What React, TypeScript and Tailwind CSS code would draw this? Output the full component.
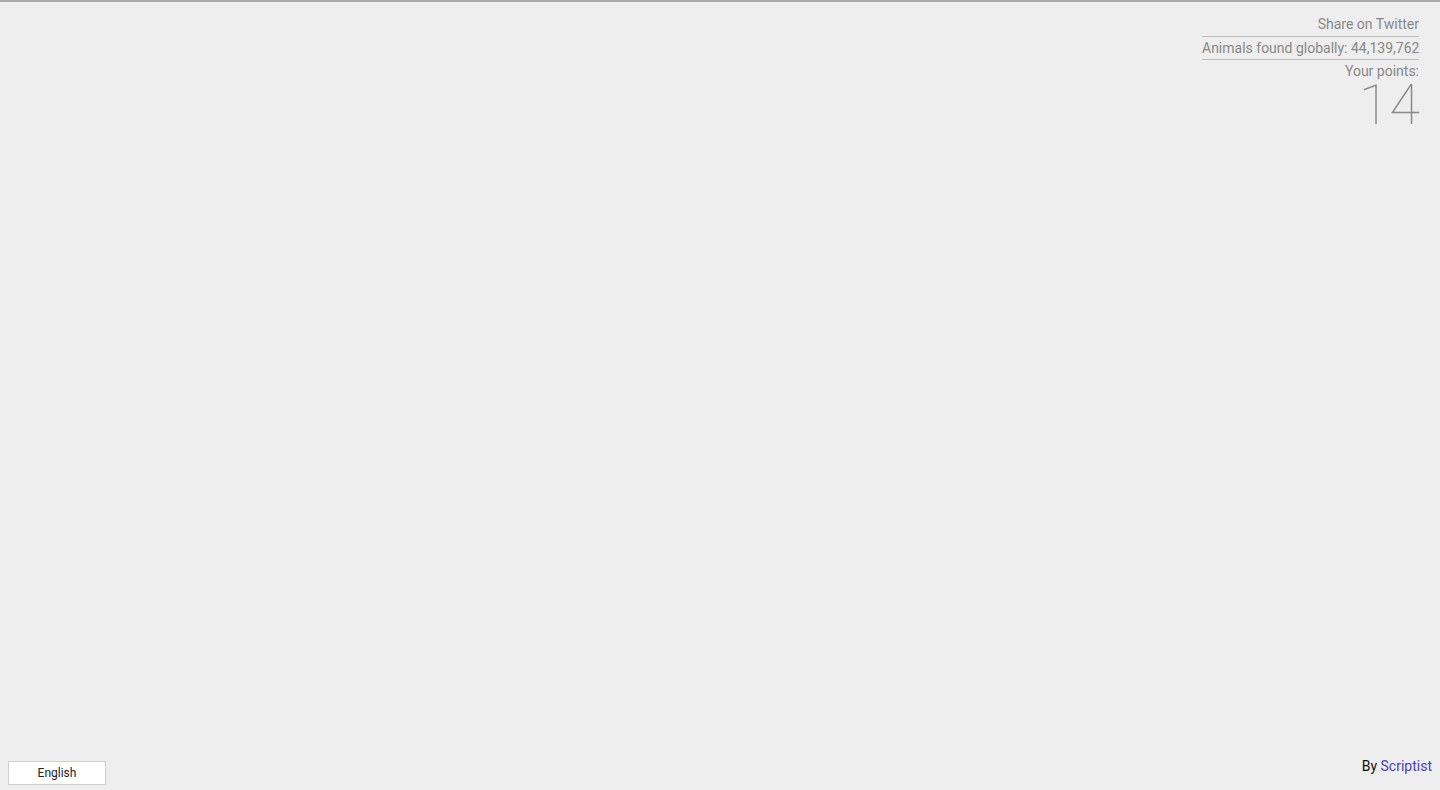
import React from 'react';

export default function App() {
  return (
    <div className="h-[790px] w-full bg-[#eeeeee] relative overflow-hidden" style={{ fontFamily: 'Roboto, "Liberation Sans", sans-serif' }}>
      <div className="h-[2px] bg-[#a9a9a9]" />

      {/* Stats panel */}
      <div className="flex justify-end pr-[21px] pt-[14px]">
        <div className="w-[217px] flex flex-col items-end text-[14px] text-[#888888] leading-[16px]">
          <div className="w-full text-right pb-[4px] border-b border-[#bdbdbd]">Share on Twitter</div>
          <div className="w-full text-right pt-[3px] pb-[3px] border-b border-[#bdbdbd] whitespace-nowrap">Animals found globally: 44,139,762</div>
          <div className="pt-[3px]">Your points:</div>
          <div className="text-[56px] leading-[52px] font-thin text-[#8a8a8a] mr-[-1px]">14</div>
        </div>
      </div>

      {/* Language selector */}
      <div className="absolute left-[8px] bottom-[5px] w-[98px] h-[24px] bg-white border border-[#cfcfcf] flex items-center justify-center text-[12px] text-[#222222]">
        English
      </div>

      {/* Credit */}
      <div className="absolute right-[8px] bottom-[13px] text-[14px] text-[#111111]">
        By <span className="text-[#4b3fb0]">Scriptist</span>
      </div>
    </div>
  );
}
